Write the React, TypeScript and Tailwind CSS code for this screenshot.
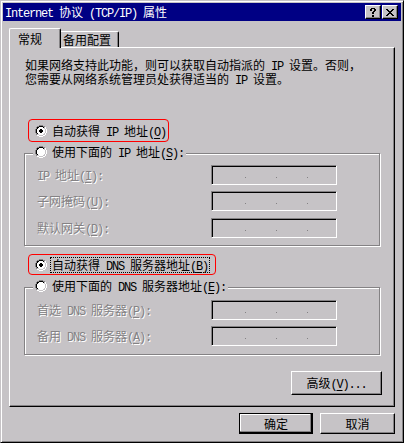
import React from "react";

const A = "font-['Liberation_Mono',monospace] text-[12px] tracking-[-1.2px] leading-[10px]";
const C = "font-['Noto_Sans_CJK_SC','Noto_Sans',sans-serif] text-[12px] leading-[13px]";

function Txt({ s, className = "" }: { s: string; className?: string }) {
  const parts: React.ReactNode[] = [];
  let i = 0;
  let k = 0;
  while (i < s.length) {
    if (s[i] === "&") {
      const ch = s[i + 1];
      parts.push(
        <span key={k++} className={(ch.charCodeAt(0) < 128 ? A : C) + " underline underline-offset-[2px]"}>
          {ch}
        </span>
      );
      i += 2;
      continue;
    }
    const ascii = s.charCodeAt(i) < 128;
    let j = i;
    while (j < s.length && s[j] !== "&" && (s.charCodeAt(j) < 128) === ascii) j++;
    parts.push(
      <span key={k++} className={ascii ? A : C}>
        {s.slice(i, j)}
      </span>
    );
    i = j;
  }
  return (
    <span className={"whitespace-pre text-[12px] leading-[13px] font-['Noto_Sans_CJK_SC',sans-serif] " + className}>
      {parts}
    </span>
  );
}

function Radio({ checked = false }: { checked?: boolean }) {
  const rects: React.ReactNode[] = [];
  for (let y = 0; y < 12; y++) {
    for (let x = 0; x < 12; x++) {
      const d = Math.hypot(x - 5.5, y - 5.5);
      let c: string | null = null;
      if (d > 5.8) c = null;
      else if (d >= 5.0) c = x + y < 11 ? "#848284" : "#ffffff";
      else if (d >= 4.2) c = x + y < 11 ? "#000000" : "#c6c3c6";
      else c = checked && d < 2.0 ? "#000000" : "#ffffff";
      if (c) rects.push(<rect key={x + "-" + y} x={x} y={y} width={1} height={1} fill={c} />);
    }
  }
  return (
    <svg width={12} height={12} viewBox="0 0 12 12" shapeRendering="crispEdges" className="block shrink-0">
      {rects}
    </svg>
  );
}

function Bitmap({ rows }: { rows: string[] }) {
  const w = rows[0].length;
  const h = rows.length;
  const rects: React.ReactNode[] = [];
  rows.forEach((r, y) =>
    r.split("").forEach((ch, x) => {
      if (ch === "K") rects.push(<rect key={x + "-" + y} x={x} y={y} width={1} height={1} fill="#000" />);
    })
  );
  return (
    <svg width={w} height={h} viewBox={`0 0 ${w} ${h}`} shapeRendering="crispEdges" className="block">
      {rects}
    </svg>
  );
}

function TitleBtn({ rows }: { rows: string[] }) {
  return (
    <div className="w-[16px] h-[14px] bg-[#c6c3c6] border border-t-white border-l-white border-r-black border-b-black shadow-[inset_-1px_-1px_0_#848284] flex items-center justify-center">
      <Bitmap rows={rows} />
    </div>
  );
}

function IpField() {
  return (
    <div className="w-[126px] h-[20px] shrink-0 border border-t-[#848284] border-l-[#848284] border-r-white border-b-white shadow-[inset_1px_1px_0_#000] flex items-start pt-[11px] pl-[33px] gap-[30px]">
      <span className="w-px h-px bg-[#848284]" />
      <span className="w-px h-px bg-[#848284]" />
      <span className="w-px h-px bg-[#848284]" />
    </div>
  );
}

function Row({ label, className = "" }: { label: string; className?: string }) {
  return (
    <div className={"flex items-center pl-[12px] " + className}>
      <div className="w-[174px] flex text-[#848284] [text-shadow:1px_1px_0_#fff]">
        <Txt s={label} />
      </div>
      <IpField />
    </div>
  );
}

function Caption({ label }: { label: string }) {
  return (
    <div className="absolute left-[8px] top-[-8px] h-[12px] px-[2px] bg-[#c6c3c6] flex items-center gap-[5px]">
      <Radio />
      <Txt s={label} />
    </div>
  );
}

export default function App() {
  return (
    <div className="w-[404px] h-[443px] text-[12px] leading-[13px] bg-[#c6c3c6] border border-t-[#c6c3c6] border-l-[#c6c3c6] border-r-black border-b-black shadow-[inset_1px_1px_0_#fff,inset_-1px_-1px_0_#848284] p-[2px] flex flex-col text-black overflow-hidden">
      {/* title bar */}
      <div className="h-[18px] shrink-0 bg-[#000084] flex items-center pl-[2px] pr-[3px]">
        <Txt s="Internet 协议 (TCP/IP) 属性" className="text-white" />
        <div className="ml-auto flex gap-[1px]">
          <TitleBtn
            rows={[".KKKK.", "KK..KK", "KK..KK", "...KK.", "..KK..", "..KK..", "......", "..KK..", "..KK.."]}
          />
          <TitleBtn rows={["KK....KK", ".KK..KK.", "..KKKK..", "...KK...", "..KKKK..", ".KK..KK.", "KK....KK"]} />
        </div>
      </div>

      {/* tabs */}
      <div className="mt-[7px] ml-[6px] h-[19px] shrink-0 flex items-end">
        <div className="relative z-10 -mb-px h-[20px] w-[52px] bg-[#c6c3c6] border-l border-t border-r border-l-white border-t-white border-r-black shadow-[inset_-1px_0_0_#848284] rounded-t-[2px] flex items-center pl-[8px]">
          <Txt s="常规" />
        </div>
        <div className="h-[16px] w-[58px] border-t border-r border-t-white border-r-black shadow-[inset_-1px_0_0_#848284] rounded-tr-[2px] flex items-center pl-[2px]">
          <Txt s="备用配置" />
        </div>
      </div>

      {/* panel */}
      <div className="mx-[6px] h-[360px] shrink-0 border border-t-white border-l-white border-r-black border-b-black shadow-[inset_-1px_-1px_0_#848284] flex flex-col items-start">
        <div className="ml-[15px] mt-[10px] flex flex-col">
          <Txt s="如果网络支持此功能，则可以获取自动指派的 IP 设置。否则，" />
          <Txt s="您需要从网络系统管理员处获得适当的 IP 设置。" />
        </div>

        <div className="ml-[18px] mt-[33px] w-[141px] h-[23px] border border-[#ff0000] rounded-[4px] flex items-center pl-[6px] gap-[5px]">
          <Radio checked />
          <Txt s="自动获得 IP 地址(&O)" />
        </div>

        <div className="relative ml-[14px] mt-[11px] w-[356px] h-[93px] border border-[#848284] shadow-[inset_1px_1px_0_#fff,1px_1px_0_#fff] pt-[11px]">
          <Caption label="使用下面的 IP 地址(&S):" />
          <Row label="IP 地址(&I):" />
          <Row label="子网掩码(&U):" className="mt-[6px]" />
          <Row label="默认网关(&D):" className="mt-[7px]" />
        </div>

        <div className="ml-[18px] mt-[8px] w-[188px] h-[21px] border border-[#ff0000] rounded-[4px] flex items-center pl-[6px] gap-[3px]">
          <Radio checked />
          <span className="border border-dotted border-black px-[1px] flex">
            <Txt s="自动获得 DNS 服务器地址(&B)" />
          </span>
        </div>

        <div className="relative ml-[14px] mt-[12px] w-[356px] h-[68px] border border-[#848284] shadow-[inset_1px_1px_0_#fff,1px_1px_0_#fff] pt-[12px]">
          <Caption label="使用下面的 DNS 服务器地址(&E):" />
          <Row label="首选 DNS 服务器(&P):" />
          <Row label="备用 DNS 服务器(&A):" className="mt-[6px]" />
        </div>

        <div className="ml-[281px] mt-[16px] w-[91px] h-[24px] border border-t-white border-l-white border-r-black border-b-black shadow-[inset_-1px_-1px_0_#848284] flex items-center justify-center">
          <Txt s="高级(&V)..." />
        </div>
      </div>

      {/* bottom buttons */}
      <div className="mt-[6px] mr-[6px] flex justify-end gap-[7px] shrink-0">
        <div className="w-[74px] h-[21px] border border-black shadow-[inset_-1px_-1px_0_#000,inset_-2px_-2px_0_#848284,inset_1px_1px_0_#fff] flex items-center justify-center">
          <Txt s="确定" />
        </div>
        <div className="w-[75px] h-[21px] border border-t-white border-l-white border-r-black border-b-black shadow-[inset_-1px_-1px_0_#848284] flex items-center justify-center">
          <Txt s="取消" />
        </div>
      </div>
    </div>
  );
}
